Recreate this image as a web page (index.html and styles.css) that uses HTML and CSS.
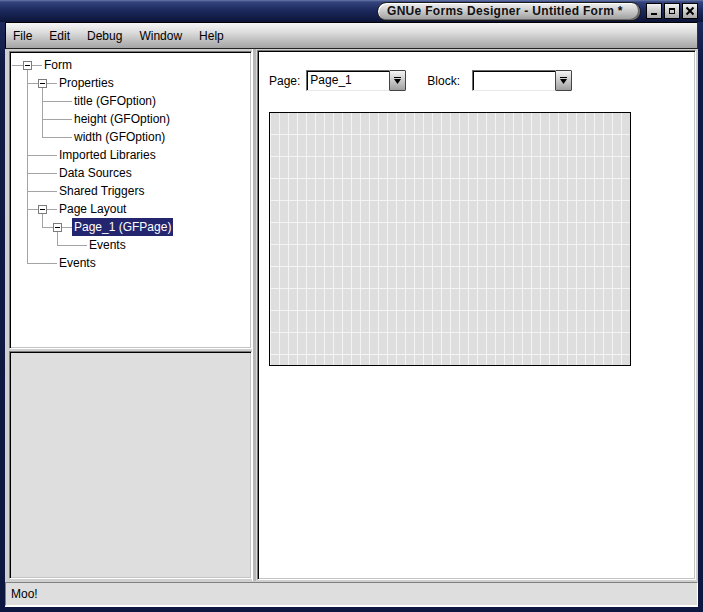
FILE: index.html
```html
<!DOCTYPE html>
<html>
<head>
<meta charset="utf-8">
<link rel="stylesheet" href="styles.css">
</head>
<body>
<div class="window">
  <div class="titlebar">
    <div class="title-pill">GNUe Forms Designer - Untitled Form *</div>
    <div class="wbtns">
      <span class="wbtn"><svg width="12" height="12" viewBox="0 0 12 12"><rect x="3" y="8" width="6" height="2" fill="#000"/></svg></span>
      <span class="wbtn"><svg width="12" height="12" viewBox="0 0 12 12"><rect x="3.5" y="3.5" width="5" height="5" fill="none" stroke="#000" stroke-width="1"/><rect x="3" y="3" width="6" height="2" fill="#000"/></svg></span>
      <span class="wbtn"><svg width="12" height="12" viewBox="0 0 12 12"><path d="M2.5 2.5 L9.5 9.5 M9.5 2.5 L2.5 9.5" stroke="#000" stroke-width="2"/></svg></span>
    </div>
  </div>
  <div class="frame">
    <div class="menubar">
      <span class="menu">File</span>
      <span class="menu">Edit</span>
      <span class="menu">Debug</span>
      <span class="menu">Window</span>
      <span class="menu">Help</span>
    </div>
    <div class="main">
      <div class="leftcol">
        <div class="tree sunken">
          <div class="row"><svg width="31" height="18"><line x1="1" y1="9.5" x2="12" y2="9.5"/><rect x="12.5" y="5.5" width="8" height="8"/><line class="minus" x1="14" y1="9.5" x2="19" y2="9.5"/><line x1="21" y1="9.5" x2="31" y2="9.5"/><line x1="16.5" y1="14" x2="16.5" y2="18"/></svg><span class="label">Form</span></div>
          <div class="row"><svg width="46" height="18"><line x1="16.5" y1="0" x2="16.5" y2="18"/><line x1="17" y1="9.5" x2="27" y2="9.5"/><rect x="27.5" y="5.5" width="8" height="8"/><line class="minus" x1="29" y1="9.5" x2="34" y2="9.5"/><line x1="36" y1="9.5" x2="46" y2="9.5"/><line x1="31.5" y1="14" x2="31.5" y2="18"/></svg><span class="label">Properties</span></div>
          <div class="row"><svg width="61" height="18"><line x1="16.5" y1="0" x2="16.5" y2="18"/><line x1="31.5" y1="0" x2="31.5" y2="18"/><line x1="32" y1="9.5" x2="61" y2="9.5"/></svg><span class="label">title (GFOption)</span></div>
          <div class="row"><svg width="61" height="18"><line x1="16.5" y1="0" x2="16.5" y2="18"/><line x1="31.5" y1="0" x2="31.5" y2="18"/><line x1="32" y1="9.5" x2="61" y2="9.5"/></svg><span class="label">height (GFOption)</span></div>
          <div class="row"><svg width="61" height="18"><line x1="16.5" y1="0" x2="16.5" y2="18"/><line x1="31.5" y1="0" x2="31.5" y2="10"/><line x1="32" y1="9.5" x2="61" y2="9.5"/></svg><span class="label">width (GFOption)</span></div>
          <div class="row"><svg width="46" height="18"><line x1="16.5" y1="0" x2="16.5" y2="18"/><line x1="17" y1="9.5" x2="46" y2="9.5"/></svg><span class="label">Imported Libraries</span></div>
          <div class="row"><svg width="46" height="18"><line x1="16.5" y1="0" x2="16.5" y2="18"/><line x1="17" y1="9.5" x2="46" y2="9.5"/></svg><span class="label">Data Sources</span></div>
          <div class="row"><svg width="46" height="18"><line x1="16.5" y1="0" x2="16.5" y2="18"/><line x1="17" y1="9.5" x2="46" y2="9.5"/></svg><span class="label">Shared Triggers</span></div>
          <div class="row"><svg width="46" height="18"><line x1="16.5" y1="0" x2="16.5" y2="18"/><line x1="17" y1="9.5" x2="27" y2="9.5"/><rect x="27.5" y="5.5" width="8" height="8"/><line class="minus" x1="29" y1="9.5" x2="34" y2="9.5"/><line x1="36" y1="9.5" x2="46" y2="9.5"/><line x1="31.5" y1="14" x2="31.5" y2="18"/></svg><span class="label">Page Layout</span></div>
          <div class="row"><svg width="61" height="18"><line x1="16.5" y1="0" x2="16.5" y2="18"/><line x1="31.5" y1="0" x2="31.5" y2="10"/><line x1="32" y1="9.5" x2="42" y2="9.5"/><rect x="42.5" y="5.5" width="8" height="8"/><line class="minus" x1="44" y1="9.5" x2="49" y2="9.5"/><line x1="51" y1="9.5" x2="61" y2="9.5"/><line x1="46.5" y1="14" x2="46.5" y2="18"/></svg><span class="label selected">Page_1 (GFPage)</span></div>
          <div class="row"><svg width="76" height="18"><line x1="16.5" y1="0" x2="16.5" y2="18"/><line x1="46.5" y1="0" x2="46.5" y2="10"/><line x1="47" y1="9.5" x2="76" y2="9.5"/></svg><span class="label">Events</span></div>
          <div class="row"><svg width="46" height="18"><line x1="16.5" y1="0" x2="16.5" y2="10"/><line x1="17" y1="9.5" x2="46" y2="9.5"/></svg><span class="label">Events</span></div>
        </div>
        <div class="props sunken"></div>
      </div>
      <div class="vsplit"></div>
      <div class="editor sunken">
        <div class="toolbar">
          <span class="lbl lbl-page">Page:</span>
          <div class="combo">
            <div class="entry">Page_1</div>
            <div class="cbtn"><svg width="9" height="9" viewBox="0 0 9 9"><rect x="1" y="1" width="7" height="1" fill="#000"/><polygon points="1,3 8,3 4.5,8" fill="#000"/></svg></div>
          </div>
          <span class="lbl lbl-block">Block:</span>
          <div class="combo">
            <div class="entry"></div>
            <div class="cbtn"><svg width="9" height="9" viewBox="0 0 9 9"><rect x="1" y="1" width="7" height="1" fill="#000"/><polygon points="1,3 8,3 4.5,8" fill="#000"/></svg></div>
          </div>
        </div>
        <div class="canvas"></div>
      </div>
    </div>
    <div class="status">Moo!</div>
  </div>
</div>
</body>
</html>
```
FILE: styles.css
```css
html, body {
  margin: 0;
  padding: 0;
}
body {
  width: 703px;
  height: 612px;
  overflow: hidden;
  font-family: "Liberation Sans", Arial, sans-serif;
  font-size: 12px;
  color: #000;
}
.window {
  width: 703px;
  height: 612px;
  display: flex;
  flex-direction: column;
  background: linear-gradient(to bottom, #24326a 0, #111a44 60px, #0e1740 100%);
  box-sizing: border-box;
}
.titlebar {
  height: 22px;
  flex: none;
  display: flex;
  align-items: center;
  justify-content: flex-end;
  padding-right: 5px;
  background: linear-gradient(to bottom, #6a78a8 0, #34447c 2px, #1c2a5e 10px, #0c1438 22px);
}
.title-pill {
  width: 264px;
  height: 19px;
  box-sizing: border-box;
  border: 1px solid #1a1a1a;
  border-radius: 10px;
  background: linear-gradient(to bottom, #f0f0f0 0, #c8c8c8 50%, #9c9c9c 100%);
  box-shadow: inset -2px -1px 0 #6a6a6a, inset 1px 1px 0 #ffffff;
  font-weight: bold;
  font-size: 12px;
  letter-spacing: 0.3px;
  line-height: 17px;
  padding-left: 9px;
  white-space: nowrap;
  margin-right: 5px;
  color: #111;
}
.wbtns {
  display: flex;
  gap: 2px;
}
.wbtn {
  width: 16px;
  height: 16px;
  box-sizing: border-box;
  border: 1px solid #000;
  background: linear-gradient(to bottom, #f2f2f2, #a8a8a8);
  display: flex;
  align-items: center;
  justify-content: center;
}
.frame {
  flex: 1;
  margin: 0 5px 5px 5px;
  display: flex;
  flex-direction: column;
  background: #cfcfcf;
  border-bottom: 1px solid #ffffff;
  min-height: 0;
}
.menubar {
  height: 27px;
  flex: none;
  box-sizing: border-box;
  display: flex;
  align-items: center;
  gap: 1px;
  border-top: 1px solid #000;
  border-left: 1px solid #000;
  border-right: 1px solid #333;
  border-bottom: 1px solid #222;
  background: linear-gradient(to bottom, #f6f6f6 0, #dedede 35%, #a4a4a4 100%);
}
.menu {
  padding: 0 8px;
  line-height: 14px;
}
.menu:first-child {
  padding-left: 7px;
}
.main {
  flex: 1;
  display: flex;
  min-height: 0;
}
.sunken {
  box-sizing: border-box;
  border: 1px solid;
  border-color: #7a7a7a #ffffff #ffffff #7a7a7a;
  box-shadow: inset 1px 1px 0 #000, inset -1px -1px 0 #c4c4c4;
}
.leftcol {
  width: 243px;
  flex: none;
  margin-left: 4px;
  padding-top: 2px;
  padding-bottom: 2px;
  display: flex;
  flex-direction: column;
  gap: 2px;
}
.tree {
  height: 298px;
  flex: none;
  background: #ffffff;
  padding: 4px 0 0 1px;
}
.row {
  display: flex;
  align-items: center;
  height: 18px;
}
.row svg {
  display: block;
  flex: none;
  shape-rendering: crispEdges;
}
.row svg line {
  stroke: #a4a4a4;
  stroke-width: 1;
}
.row svg rect {
  fill: #ffffff;
  stroke: #7c7c7c;
  stroke-width: 1;
}
.row svg line.minus {
  stroke: #000;
}
.label {
  padding: 0 2px;
  line-height: 18px;
  height: 18px;
  white-space: nowrap;
}
.label.selected {
  background: #23266e;
  color: #ffffff;
}
.props {
  flex: 1;
  background: #dedede;
}
.vsplit {
  width: 5px;
  flex: none;
  box-sizing: border-box;
  border-left: 1px solid #ffffff;
  background: #b8b8b8;
  border-right: 1px solid #d8d8d8;
}
.editor {
  flex: 1;
  margin: 1px 2px 1px 0;
  background: #ffffff;
  padding: 19px 0 0 11px;
}
.toolbar {
  display: flex;
  align-items: center;
  height: 21px;
}
.lbl {
  white-space: nowrap;
}
.lbl-page {
  margin-right: 6px;
}
.lbl-block {
  margin-left: 21px;
  margin-right: 12px;
}
.combo {
  display: flex;
  height: 21px;
}
.entry {
  width: 83px;
  box-sizing: border-box;
  border-top: 1px solid #6c6c6c;
  border-left: 1px solid #6c6c6c;
  border-bottom: 1px solid #e8e8e8;
  box-shadow: inset 1px 1px 0 #000;
  padding: 0 0 0 3px;
  line-height: 19px;
  background: #fff;
}
.cbtn {
  width: 17px;
  box-sizing: border-box;
  border: 1px solid #444;
  border-radius: 1px;
  background: linear-gradient(to bottom, #f4f4f4, #a0a0a0);
  display: flex;
  align-items: center;
  justify-content: center;
}
.cbtn svg {
  display: block;
}
.canvas {
  margin-top: 21px;
  width: 362px;
  height: 254px;
  box-sizing: border-box;
  border: 1px solid #000;
  background-color: #dedede;
  background-image:
    linear-gradient(to right, #f4f4f4 1px, transparent 1px),
    linear-gradient(to bottom, transparent 21px, #f4f4f4 21px);
  background-size: 9px 22px, 9px 22px;
  background-position: 0 0, 0 0;
}
.status {
  height: 24px;
  flex: none;
  box-sizing: border-box;
  margin-top: 1px;
  border: 1px solid;
  border-color: #808080 #ffffff #ffffff #808080;
  background: #dedede;
  padding-left: 5px;
  line-height: 22px;
}
```
